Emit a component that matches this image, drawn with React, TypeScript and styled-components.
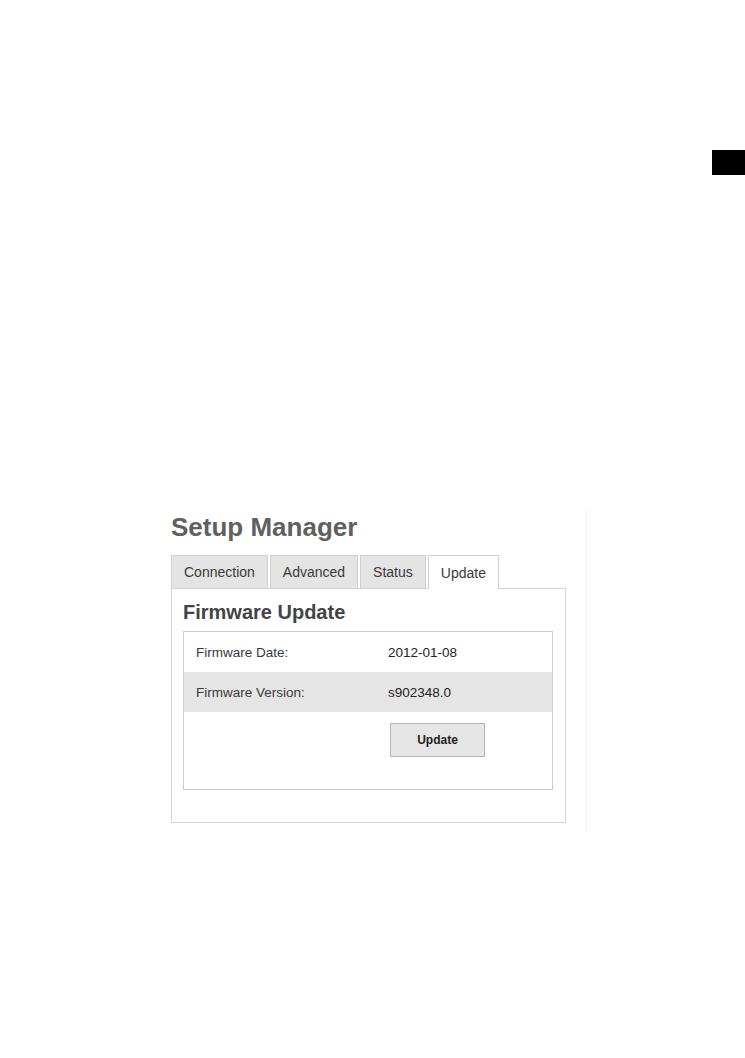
import styled, { createGlobalStyle } from 'styled-components';

const GlobalStyle = createGlobalStyle`
  html, body {
    margin: 0;
    padding: 0;
    background: #ffffff;
  }
  body {
    font-family: "Liberation Sans", Arial, sans-serif;
    color: #333333;
  }
`;

type Tab = {
  label: string;
  active?: boolean;
};

type Row = {
  label: string;
  value: string;
};

const tabs: Tab[] = [
  { label: 'Connection' },
  { label: 'Advanced' },
  { label: 'Status' },
  { label: 'Update', active: true },
];

const rows: Row[] = [
  { label: 'Firmware Date:', value: '2012-01-08' },
  { label: 'Firmware Version:', value: 's902348.0' },
];

const Page = styled.div`
  display: flex;
  flex-direction: column;
  width: 745px;
  height: 1058px;
  overflow: hidden;
`;

const ThumbMarker = styled.div`
  align-self: flex-end;
  width: 33px;
  height: 25px;
  margin-top: 150px;
  background: #000000;
`;

const Figure = styled.div`
  margin-top: 335px;
  margin-left: 171px;
  width: 415px;
  height: 318px;
  padding-top: 2px;
  border-right: 1px solid #f1f1f1;
`;

const Title = styled.h1`
  margin: 0;
  font-size: 26px;
  line-height: 30px;
  font-weight: bold;
  color: #606060;
`;

const TabBar = styled.div`
  display: flex;
  align-items: flex-start;
  gap: 2px;
  margin-top: 13px;
  height: 33px;
  position: relative;
  z-index: 1;
`;

const TabButton = styled.div<{ $active?: boolean }>`
  height: ${p => (p.$active ? '33px' : '32px')};
  padding: 0 12px;
  display: flex;
  align-items: center;
  font-size: 14px;
  color: #3a3a3a;
  border: 1px solid #d0d0d0;
  border-bottom: none;
  background: ${p => (p.$active ? '#ffffff' : '#e4e4e4')};
  box-sizing: content-box;
`;

const Panel = styled.div`
  width: 395px;
  height: 235px;
  border: 1px solid #d4d4d4;
  padding: 11px 12px 0 11px;
  box-sizing: border-box;
`;

const Heading = styled.h2`
  margin: 0;
  font-size: 20px;
  line-height: 24px;
  font-weight: bold;
  color: #444444;
`;

const InfoBox = styled.div`
  margin-top: 7px;
  border: 1px solid #cccccc;
  height: 157px;
`;

const InfoRow = styled.div<{ $shaded?: boolean }>`
  display: grid;
  grid-template-columns: 192px 1fr;
  align-items: center;
  height: 40px;
  padding-left: 12px;
  font-size: 13.5px;
  background: ${p => (p.$shaded ? '#e5e5e5' : 'transparent')};
`;

const Label = styled.span`
  color: #3a3a3a;
`;

const Value = styled.span`
  color: #222222;
`;

const ActionRow = styled.div`
  display: grid;
  grid-template-columns: 192px 1fr;
  padding: 11px 0 0 12px;
`;

const UpdateButton = styled.button`
  grid-column: 2;
  width: 95px;
  height: 34px;
  margin-left: 2px;
  border: 1px solid #b4b4b4;
  background: #e6e6e6;
  font-family: "Liberation Sans", Arial, sans-serif;
  font-size: 12px;
  font-weight: bold;
  color: #1e1e1e;
  cursor: pointer;
`;

const App = () => {
  return (
    <Page>
      <GlobalStyle />
      <ThumbMarker />
      <Figure>
        <Title>Setup Manager</Title>
        <TabBar>
          {tabs.map(tab => (
            <TabButton key={tab.label} $active={tab.active}>
              {tab.label}
            </TabButton>
          ))}
        </TabBar>
        <Panel>
          <Heading>Firmware Update</Heading>
          <InfoBox>
            {rows.map((row, i) => (
              <InfoRow key={row.label} $shaded={i % 2 === 1}>
                <Label>{row.label}</Label>
                <Value>{row.value}</Value>
              </InfoRow>
            ))}
            <ActionRow>
              <UpdateButton>Update</UpdateButton>
            </ActionRow>
          </InfoBox>
        </Panel>
      </Figure>
    </Page>
  );
};

export default App;
